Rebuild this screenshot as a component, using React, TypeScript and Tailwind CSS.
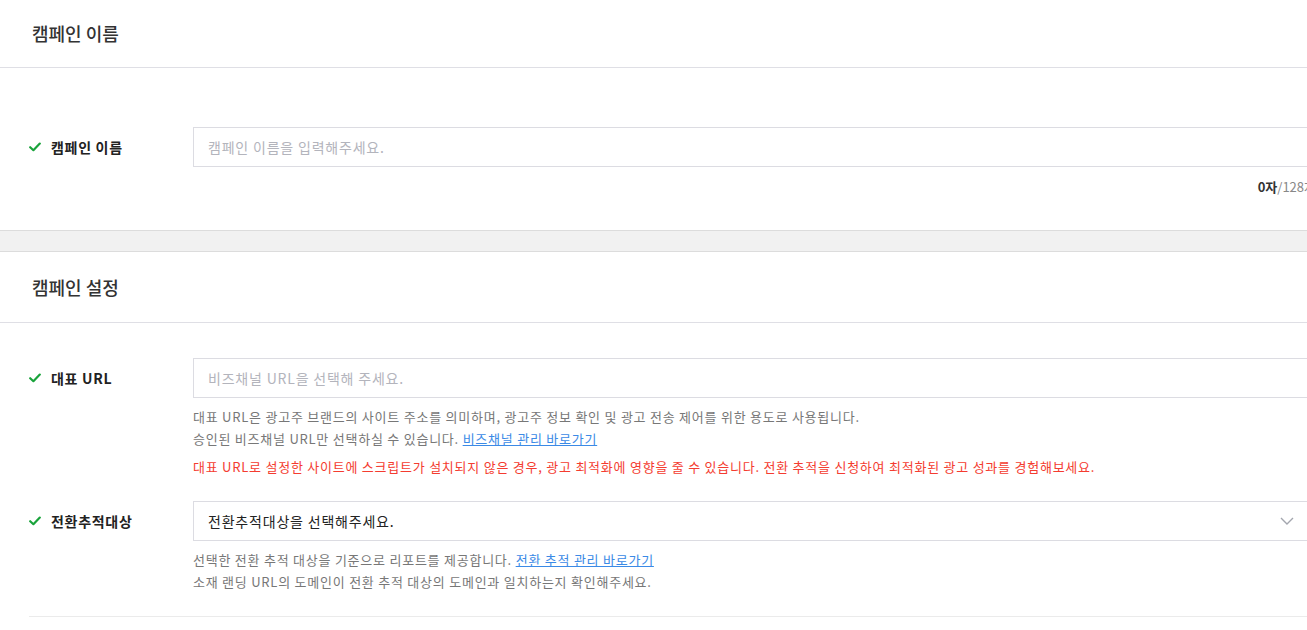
import React from "react";

const font = { fontFamily: '"Noto Sans CJK KR", "Noto Sans", sans-serif' };

function Check() {
  return (
    <svg width="12" height="10" viewBox="0 0 12 10" className="shrink-0">
      <path d="M1.2 5.2 L4.4 8.2 L10.8 1.6" fill="none" stroke="#19a33b" strokeWidth="2.2" strokeLinecap="round" strokeLinejoin="round" />
    </svg>
  );
}

function Label({ text }: { text: string }) {
  return (
    <div className="w-[193px] shrink-0 pl-[29px] h-[40px] flex items-center gap-[10px]">
      <Check />
      <span className="text-[14px] font-bold text-[#222] tracking-[0.7px]">{text}</span>
    </div>
  );
}

function SectionTitle({ title, h }: { title: string; h: string }) {
  return (
    <div className={`${h} border-b border-[#dfdfe5] px-[32px] flex items-center`}>
      <h2 className="text-[18px] text-[#333] font-medium">{title}</h2>
    </div>
  );
}

export default function App() {
  return (
    <div className="w-full h-[630px] overflow-hidden bg-white" style={font}>
      <div className="w-[1316px]">
        <SectionTitle title="캠페인 이름" h="h-[68px]" />
        <div className="pt-[59px] pb-[33px]">
          <div className="flex items-start">
            <Label text="캠페인 이름" />
            <div className="flex-1">
              <div className="h-[40px] border border-[#dcdce2] flex items-center px-[14px]">
                <span className="text-[14px] text-[#b3b4bc] tracking-[0.8px]">캠페인 이름을 입력해주세요.</span>
              </div>
              <div className="mt-[10px] text-right text-[13px] leading-[20px]">
                <span className="font-bold text-[#333]">0자</span>
                <span className="text-[#888]">/128자</span>
              </div>
            </div>
          </div>
        </div>
        <div className="h-[22px] bg-[#f1f1f1] border-y border-[#dcdcdc]" />
        <SectionTitle title="캠페인 설정" h="h-[71px]" />
        <div className="pt-[35px]">
          <div className="flex items-start">
            <Label text="대표 URL" />
            <div className="flex-1">
              <div className="h-[40px] border border-[#dcdce2] flex items-center px-[14px]">
                <span className="text-[14px] text-[#b3b4bc] tracking-[0.8px]">비즈채널 URL을 선택해 주세요.</span>
              </div>
              <div className="mt-[8px] text-[13px] leading-[22px] text-[#777] tracking-[0.76px]">
                <p>대표 URL은 광고주 브랜드의 사이트 주소를 의미하며, 광고주 정보 확인 및 광고 전송 제어를 위한 용도로 사용됩니다.</p>
                <p>
                  승인된 비즈채널 URL만 선택하실 수 있습니다.{" "}
                  <a className="text-[#3b8ae6] underline">비즈채널 관리 바로가기</a>
                </p>
                <p className="mt-[6px] text-[#f43c30]">
                  대표 URL로 설정한 사이트에 스크립트가 설치되지 않은 경우, 광고 최적화에 영향을 줄 수 있습니다. 전환 추적을 신청하여 최적화된 광고 성과를 경험해보세요.
                </p>
              </div>
            </div>
          </div>
          <div className="flex items-start mt-[23px]">
            <Label text="전환추적대상" />
            <div className="flex-1">
              <div className="h-[40px] border border-[#dcdce2] flex items-center justify-between pl-[14px] pr-[21px]">
                <span className="text-[14px] text-[#222] tracking-[0.8px]">전환추적대상을 선택해주세요.</span>
                <svg width="14" height="8" viewBox="0 0 14 8">
                  <path d="M1 1 L7 7 L13 1" fill="none" stroke="#a3a6ae" strokeWidth="1.4" />
                </svg>
              </div>
              <div className="mt-[8px] text-[13px] leading-[22px] text-[#777] tracking-[0.76px]">
                <p>
                  선택한 전환 추적 대상을 기준으로 리포트를 제공합니다.{" "}
                  <a className="text-[#3b8ae6] underline">전환 추적 관리 바로가기</a>
                </p>
                <p>소재 랜딩 URL의 도메인이 전환 추적 대상의 도메인과 일치하는지 확인해주세요.</p>
              </div>
            </div>
          </div>
          <div className="ml-[29px] mt-[23px] border-t border-[#ebebeb]" />
        </div>
      </div>
    </div>
  );
}
